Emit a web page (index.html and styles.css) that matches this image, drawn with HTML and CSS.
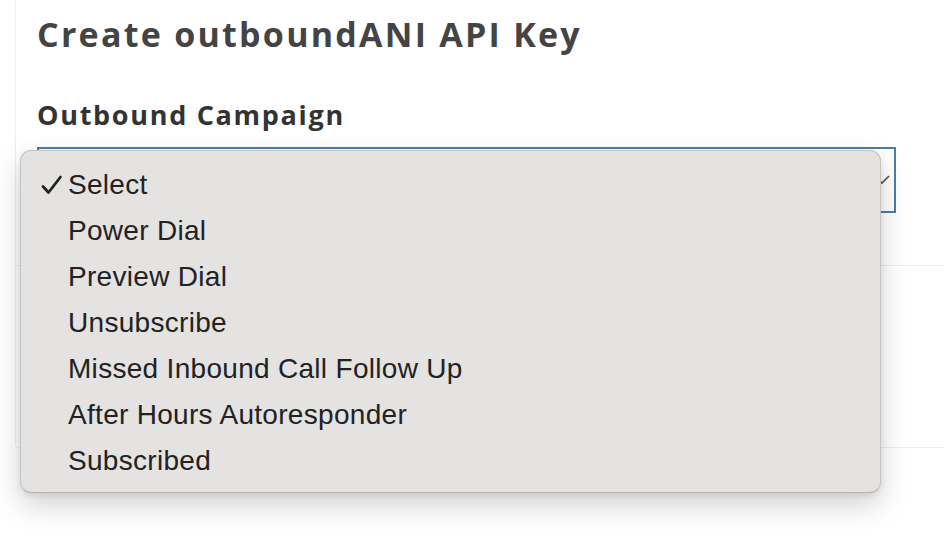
FILE: index.html
```html
<!DOCTYPE html>
<html>
<head>
<meta charset="utf-8">
<link rel="stylesheet" href="styles.css">
</head>
<body>
<div class="page">
  <div class="panel">
    <h1 class="title">Create outboundANI API Key</h1>
    <div class="field">
      <label class="label">Outbound Campaign</label>
      <div class="select">
        <svg class="chev" width="18" height="12" viewBox="0 0 18 12"><path d="M2 2 L9 9 L16 2" stroke="#555" stroke-width="1.7" fill="none"/></svg>
      </div>
    </div>
    <div class="section"></div>
  </div>
  <ul class="menu">
    <li class="item checked"><svg class="check" width="24" height="22" viewBox="0 0 24 22"><path d="M3 12.5 L8.5 18.5 L20.5 3" stroke="#1f1f1f" stroke-width="2.7" fill="none" stroke-linecap="round" stroke-linejoin="round"/></svg>Select</li>
    <li class="item">Power Dial</li>
    <li class="item">Preview Dial</li>
    <li class="item">Unsubscribe</li>
    <li class="item">Missed Inbound Call Follow Up</li>
    <li class="item">After Hours Autoresponder</li>
    <li class="item">Subscribed</li>
  </ul>
</div>
</body>
</html>
```
FILE: styles.css
```css
* { box-sizing: border-box; }
html, body { margin: 0; padding: 0; background: #fff; }
body { width: 944px; height: 546px; overflow: hidden; }
.page { position: relative; height: 546px; }
.panel {
  margin-left: 15px;
  border-left: 1px solid #efefef;
  border-bottom: 1px solid #ececec;
  border-bottom-left-radius: 4px;
  display: flex;
  flex-direction: column;
}
.title {
  margin: 0;
  padding: 14px 0 0 21px;
  font-family: "Open Sans", sans-serif;
  font-weight: 700;
  font-size: 34px;
  line-height: 40px;
  letter-spacing: 2.25px;
  color: #444;
}
.field { padding: 0 0 0 21px; }
.label {
  display: block;
  margin-top: 44px;
  font-family: "Open Sans", sans-serif;
  font-weight: 700;
  font-size: 27px;
  line-height: 34px;
  letter-spacing: 1.7px;
  color: #333;
}
.select {
  position: relative;
  margin-top: 15px;
  width: 859px;
  height: 66px;
  border: 2px solid #4b7dab;
  background: #fff;
}
.chev { position: absolute; left: 834px; top: 25px; }
.section {
  flex-shrink: 0;
  height: 182px;
  border-top: 1px solid #ededed;
  margin-top: 52px;
}
.menu {
  position: absolute;
  left: 20px;
  top: 150px;
  width: 861px;
  height: 343px;
  margin: 0;
  padding: 11px 0 0 0;
  list-style: none;
  background: #e4e3e1;
  border: 1px solid #c6c5c3;
  border-bottom-color: #b5b4b2;
  border-radius: 11px;
  box-shadow: 0 12px 28px rgba(0,0,0,0.18), 0 2px 6px rgba(0,0,0,0.08);
}
.item {
  position: relative;
  height: 46px;
  line-height: 46px;
  padding-left: 47px;
  font-family: "Liberation Sans", Arial, sans-serif;
  font-size: 28px;
  letter-spacing: 0.3px;
  color: #222;
}
.check {
  position: absolute;
  left: 19px;
  top: 12px;
}
```
